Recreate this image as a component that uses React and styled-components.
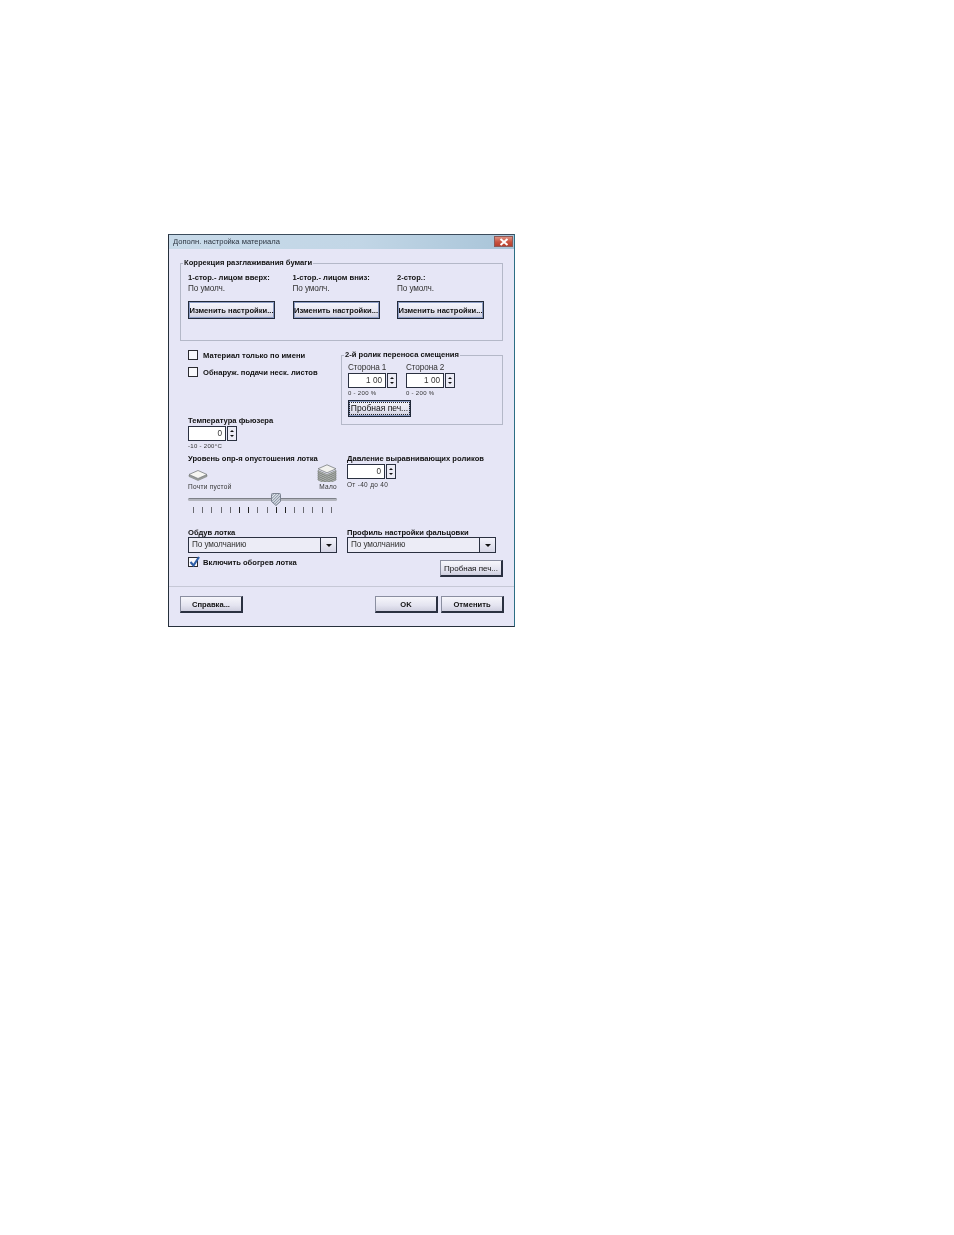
import styled, { createGlobalStyle } from "styled-components";

const GlobalStyle = createGlobalStyle`
    html, body {
        margin: 0;
        background: #FFFFFF;
    }
`;

const TICKS = [0, 0, 0, 0, 0, 1, 1, 0, 0, 1, 1, 0, 0, 0, 0, 0];

function FlatSheet() {
    return (
        <svg width="20" height="18" viewBox="0 0 20 18">
            <path d="M1 11 L10 15 L19 11 L19 12.5 L10 16.5 L1 12.5 Z" fill="#A4A8A4" stroke="#6A6E6A" strokeWidth="0.5" />
            <path d="M1 10.5 L10 6.5 L19 10.5 L10 14.5 Z" fill="#F6F6F2" stroke="#6A6E70" strokeWidth="0.7" />
        </svg>
    );
}

function PaperStack() {
    const layers = [10, 8, 6, 4, 2];
    return (
        <svg width="20" height="18" viewBox="0 0 20 18">
            {layers.map((offset) => (
                <path
                    key={offset}
                    d={`M1 ${4.5 + offset} L10 ${8.5 + offset} L19 ${4.5 + offset} L19 ${6 + offset} L10 ${10 + offset} L1 ${6 + offset} Z`}
                    fill="#C4C8C4"
                    stroke="#62665F"
                    strokeWidth="0.6"
                />
            ))}
            <path d="M1 4.8 L10 0.8 L19 4.8 L10 8.8 Z" fill="#F2F2EE" stroke="#6A6E70" strokeWidth="0.7" />
        </svg>
    );
}

function Spinner({ value }) {
    return (
        <SpinRow>
            <SpinInput>{value}</SpinInput>
            <SpinArrows>
                <ArrowUp />
                <ArrowDown />
            </SpinArrows>
        </SpinRow>
    );
}

function Select({ value }) {
    return (
        <SelectBox>
            <SelectValue>{value}</SelectValue>
            <SelectArrow>
                <ArrowDown $wide />
            </SelectArrow>
        </SelectBox>
    );
}

function App() {
    return (
        <Page>
            <GlobalStyle />
            <Dialog>
                <TitleBar>
                    <span>Дополн. настройка материала</span>
                    <CloseButton>
                        <svg width="10" height="8" viewBox="0 0 10 8">
                            <path d="M1.5 1 L8.5 7 M8.5 1 L1.5 7" stroke="#FFFFFF" strokeWidth="2" />
                        </svg>
                    </CloseButton>
                </TitleBar>
                <Body>
                    <TopGroup>
                        <Legend>Коррекция разглаживания бумаги</Legend>
                        <ColumnRow>
                            <ModeColumn>
                                <BoldLabel>1-стор.- лицом вверх:</BoldLabel>
                                <PlainLabel>По умолч.</PlainLabel>
                                <FocusButton>Изменить настройки...</FocusButton>
                            </ModeColumn>
                            <ModeColumn>
                                <BoldLabel>1-стор.- лицом вниз:</BoldLabel>
                                <PlainLabel>По умолч.</PlainLabel>
                                <FocusButton>Изменить настройки...</FocusButton>
                            </ModeColumn>
                            <ModeColumn>
                                <BoldLabel>2-стор.:</BoldLabel>
                                <PlainLabel>По умолч.</PlainLabel>
                                <FocusButton>Изменить настройки...</FocusButton>
                            </ModeColumn>
                        </ColumnRow>
                    </TopGroup>

                    <Settings>
                        <LeftTop>
                            <CheckRow>
                                <CheckBox />
                                <BoldLabel>Материал только по имени</BoldLabel>
                            </CheckRow>
                            <CheckRow>
                                <CheckBox />
                                <BoldLabel>Обнаруж. подачи неск. листов</BoldLabel>
                            </CheckRow>
                            <TempBlock>
                                <BoldLabel>Температура фьюзера</BoldLabel>
                                <Spinner value="0" />
                                <RangeLabel>-10 - 200°C</RangeLabel>
                            </TempBlock>
                        </LeftTop>

                        <RollerGroup>
                            <Legend>2-й ролик переноса смещения</Legend>
                            <SideRow>
                                <div>
                                    <PlainLabel>Сторона 1</PlainLabel>
                                    <Spinner value="1 00" />
                                    <RangeLabel>0 - 200 %</RangeLabel>
                                </div>
                                <div>
                                    <PlainLabel>Сторона 2</PlainLabel>
                                    <Spinner value="1 00" />
                                    <RangeLabel>0 - 200 %</RangeLabel>
                                </div>
                            </SideRow>
                            <DottedButton>
                                <span>Пробная печ...</span>
                            </DottedButton>
                        </RollerGroup>

                        <LevelBlock>
                            <BoldLabel>Уровень опр-я опустошения лотка</BoldLabel>
                            <StackRow>
                                <FlatSheet />
                                <PaperStack />
                            </StackRow>
                            <StackLabels>
                                <TinyLabel>Почти пустой</TinyLabel>
                                <TinyLabel>Мало</TinyLabel>
                            </StackLabels>
                            <Track>
                                <Thumb>
                                    <svg width="10" height="13" viewBox="0 0 10 13">
                                        <defs>
                                            <pattern id="hatch" width="2" height="2" patternUnits="userSpaceOnUse" patternTransform="rotate(45)">
                                                <rect width="2" height="2" fill="#E8ECF2" />
                                                <rect width="1" height="2" fill="#8D98A8" />
                                            </pattern>
                                        </defs>
                                        <path d="M0.5 1.5 Q0.5 0.5 1.5 0.5 L8.5 0.5 Q9.5 0.5 9.5 1.5 L9.5 8.5 L5 12.5 L0.5 8.5 Z" fill="url(#hatch)" stroke="#7C8390" />
                                    </svg>
                                </Thumb>
                            </Track>
                            <TickRow>
                                {TICKS.map((dark, i) => (
                                    <Tick key={i} $dark={dark} />
                                ))}
                            </TickRow>
                        </LevelBlock>

                        <PressureBlock>
                            <BoldLabel>Давление выравнивающих роликов</BoldLabel>
                            <Spinner value="0" />
                            <PressureRange>От -40 до 40</PressureRange>
                        </PressureBlock>

                        <SelectBlock>
                            <BoldLabel>Обдув лотка</BoldLabel>
                            <Select value="По умолчанию" />
                        </SelectBlock>

                        <SelectBlock $inset>
                            <BoldLabel>Профиль настройки фальцовки</BoldLabel>
                            <Select value="По умолчанию" />
                        </SelectBlock>

                        <HeatRow>
                            <CheckBox>
                                <svg width="13" height="13" viewBox="0 0 13 13">
                                    <path d="M2.5 7 L5.5 10.5 L11 2" fill="none" stroke="#2F5FA8" strokeWidth="2.2" />
                                </svg>
                            </CheckBox>
                            <BoldLabel>Включить обогрев лотка</BoldLabel>
                        </HeatRow>

                        <TestCell>
                            <PlainButton>Пробная печ...</PlainButton>
                        </TestCell>
                    </Settings>

                    <Separator />

                    <Footer>
                        <PlainButton $bold>Справка...</PlainButton>
                        <FooterRight>
                            <PlainButton $bold>OK</PlainButton>
                            <PlainButton $bold>Отменить</PlainButton>
                        </FooterRight>
                    </Footer>
                </Body>
            </Dialog>
        </Page>
    );
}

export default App;

const Page = styled.div`
    padding: 234px 0 0 168px;
    height: 1235px;
    box-sizing: border-box;
    font-family: "Liberation Sans", Arial, sans-serif;
    font-size: 7.6px;
    color: #111111;
`;

const Dialog = styled.div`
    width: 347px;
    height: 393px;
    box-sizing: border-box;
    display: flex;
    flex-direction: column;
    background: #E6E6F6;
    border: 1px solid #26303C;
    border-right-color: #2C6E84;
    border-top-color: #3C4C5C;
    filter: blur(0.3px);
`;

const TitleBar = styled.div`
    height: 14px;
    flex: none;
    display: flex;
    align-items: center;
    justify-content: space-between;
    padding: 0 1px 2px 4px;
    box-sizing: border-box;
    color: #2C3440;
    background: linear-gradient(90deg, #C8DAE9 0%, #C2D6E6 55%, #A8C4D8 100%);
`;

const CloseButton = styled.div`
    width: 19px;
    height: 11px;
    margin-bottom: -1px;
    display: flex;
    align-items: center;
    justify-content: center;
    background: linear-gradient(180deg, #DE8F80 0%, #C9523E 55%, #B8402E 100%);
    border: 1px solid #8C5A58;
    box-sizing: border-box;
`;

const Body = styled.div`
    flex: 1;
    padding: 9px 11px 0;
    display: flex;
    flex-direction: column;
`;

const Group = styled.fieldset`
    margin: 0;
    padding: 0;
    box-sizing: border-box;
    border: 1px solid #B4B8C8;
    min-width: 0;
`;

const Legend = styled.legend`
    padding: 0 1px;
    margin-left: 2px;
    font-weight: bold;
    line-height: 10px;
`;

const TopGroup = styled(Group)`
    height: 83px;
`;

const ColumnRow = styled.div`
    display: flex;
    padding: 4px 0 0 7px;
`;

const ModeColumn = styled.div`
    width: 104.5px;
    display: flex;
    flex-direction: column;
    align-items: flex-start;
`;

const BoldLabel = styled.div`
    font-weight: bold;
    line-height: 11px;
    white-space: nowrap;
`;

const PlainLabel = styled.div`
    font-size: 8.2px;
    letter-spacing: -0.1px;
    line-height: 11px;
    white-space: nowrap;
    color: #333333;
`;

const RangeLabel = styled.div`
    font-size: 6px;
    line-height: 8px;
    margin-top: 1px;
    color: #333333;
    letter-spacing: 0.3px;
`;

const TinyLabel = styled.div`
    font-size: 6.5px;
    line-height: 8px;
    color: #333333;
    letter-spacing: 0.3px;
`;

const PressureRange = styled(TinyLabel)`
    margin-top: 2px;
`;

const ButtonBase = styled.div`
    box-sizing: border-box;
    display: flex;
    align-items: center;
    justify-content: center;
    white-space: nowrap;
    background: linear-gradient(180deg, #F6F6FB 0%, #E4E4F0 60%, #CFCFDF 100%);
`;

const FocusButton = styled(ButtonBase)`
    width: 87px;
    height: 18px;
    margin-top: 7px;
    border: 1px solid #222A3A;
    box-shadow: inset 0 0 0 1px #8C9CC4;
    font-weight: bold;
`;

const DottedButton = styled(ButtonBase)`
    width: 63px;
    height: 17px;
    margin-top: 3px;
    margin-left: 6px;
    border: 1px solid #222A3A;
    box-shadow: inset 0 0 0 1px #8C9CC4;
    font-size: 8.5px;
    span {
        border: 1px dotted #222222;
        padding: 0 1px;
        line-height: 11px;
    }
`;

const PlainButton = styled(ButtonBase)`
    width: 63px;
    height: 17px;
    border: 1px solid #8A8EA0;
    border-bottom: 2px solid #2A3040;
    border-right: 2px solid #2A3040;
    font-weight: ${(props) => (props.$bold ? "bold" : "normal")};
    font-size: ${(props) => (props.$bold ? "7.6px" : "8px")};
`;

const Settings = styled.div`
    display: grid;
    grid-template-columns: 161px 162px;
    grid-template-rows: 108px 74px 26px 25px;
    margin-top: 4px;
`;

const LeftTop = styled.div`
    padding: 5px 0 0 8px;
    display: flex;
    flex-direction: column;
`;

const CheckRow = styled.div`
    display: flex;
    align-items: center;
    gap: 5px;
    height: 10px;
    margin-bottom: 7px;
`;

const CheckBox = styled.div`
    width: 10px;
    height: 10px;
    flex: none;
    position: relative;
    box-sizing: border-box;
    background: #F8F8FC;
    border: 1px solid #2A2A30;
    svg {
        position: absolute;
        left: -1px;
        top: -3px;
    }
`;

const TempBlock = styled.div`
    margin-top: 31px;
`;

const RollerGroup = styled(Group)`
    height: 75px;
    margin-top: 5px;
`;

const SideRow = styled.div`
    display: flex;
    gap: 9px;
    padding: 2px 0 0 6px;
`;

const SpinRow = styled.div`
    display: flex;
    height: 15px;
`;

const SpinInput = styled.div`
    width: 38px;
    box-sizing: border-box;
    background: #FFFFFF;
    border: 1px solid #2A3040;
    padding-right: 3px;
    text-align: right;
    line-height: 13px;
    font-size: 8.2px;
    color: #333333;
`;

const SpinArrows = styled.div`
    width: 10px;
    margin-left: 1px;
    box-sizing: border-box;
    border: 1px solid #2A3040;
    background: #ECECF6;
    display: flex;
    flex-direction: column;
    align-items: center;
    justify-content: space-around;
    padding: 1px 0;
`;

const ArrowUp = styled.div`
    width: 0;
    height: 0;
    border-left: 2px solid transparent;
    border-right: 2px solid transparent;
    border-bottom: 2px solid #111111;
`;

const ArrowDown = styled.div`
    width: 0;
    height: 0;
    border-left: ${(props) => (props.$wide ? 3 : 2)}px solid transparent;
    border-right: ${(props) => (props.$wide ? 3 : 2)}px solid transparent;
    border-top: ${(props) => (props.$wide ? 3 : 2)}px solid #111111;
`;

const LevelBlock = styled.div`
    padding-left: 8px;
    width: 157px;
    box-sizing: border-box;
`;

const StackRow = styled.div`
    display: flex;
    align-items: flex-end;
    justify-content: space-between;
    width: 149px;
`;

const StackLabels = styled(StackRow)`
    margin-top: 1px;
`;

const Track = styled.div`
    position: relative;
    width: 149px;
    height: 3px;
    margin-top: 7px;
    border-radius: 2px;
    background: #B4B6BE;
    border-top: 1px solid #7D8088;
    box-sizing: border-box;
`;

const Thumb = styled.div`
    position: absolute;
    left: 83px;
    top: -6px;
    line-height: 0;
`;

const TickRow = styled.div`
    display: flex;
    justify-content: space-between;
    width: 139px;
    margin: 6px 0 0 5px;
`;

const Tick = styled.div`
    width: 1px;
    height: 6px;
    background: ${(props) => (props.$dark ? "#222222" : "#6A6A72")};
`;

const PressureBlock = styled.div`
    padding-left: 6px;
`;

const SelectBlock = styled.div`
    padding-left: ${(props) => (props.$inset ? 6 : 8)}px;
`;

const SelectBox = styled.div`
    display: flex;
    width: 149px;
    height: 16px;
    box-sizing: border-box;
    background: #ECECF6;
    border: 1px solid #2A3040;
    margin-top: -1px;
`;

const SelectValue = styled.div`
    flex: 1;
    padding-left: 3px;
    font-size: 8.2px;
    letter-spacing: -0.1px;
    line-height: 14px;
    color: #333333;
`;

const SelectArrow = styled.div`
    width: 15px;
    display: flex;
    align-items: center;
    justify-content: center;
    border-left: 1px solid #2A3040;
    background: linear-gradient(180deg, #F2F2FA, #D6D6E6);
`;

const HeatRow = styled.div`
    padding: 4px 0 0 8px;
    display: flex;
    align-items: flex-start;
    gap: 5px;
`;

const TestCell = styled.div`
    display: flex;
    justify-content: flex-end;
    padding-top: 7px;
`;

const Separator = styled.div`
    height: 1px;
    margin: 8px -11px 0;
    background: #C6C8D6;
`;

const Footer = styled.div`
    display: flex;
    justify-content: space-between;
    margin-top: 9px;
`;

const FooterRight = styled.div`
    display: flex;
    gap: 3px;
    margin-right: -1px;
`;
